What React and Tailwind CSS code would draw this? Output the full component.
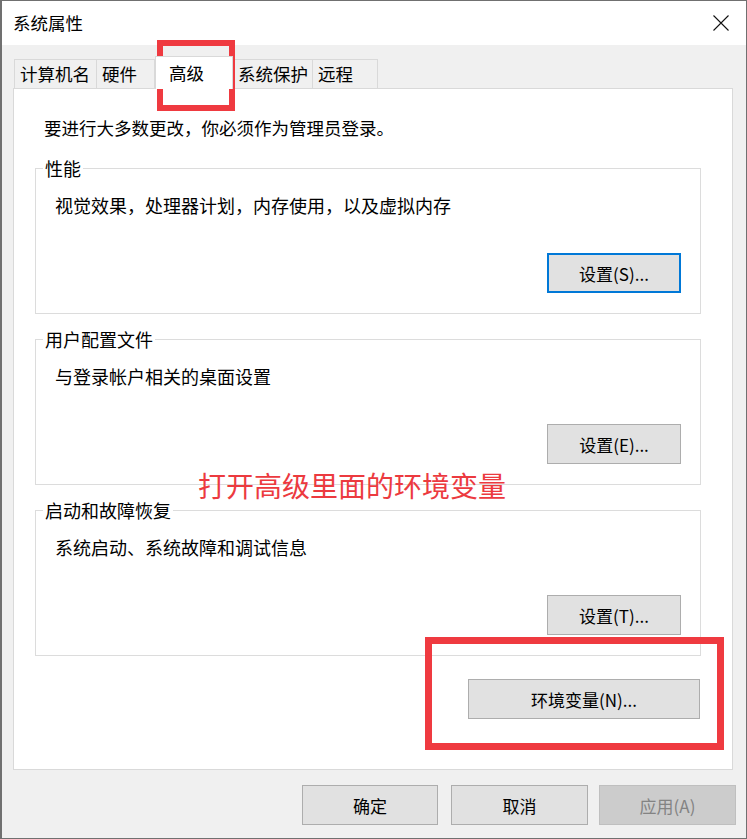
import React from "react";

const font = { fontFamily: '"Noto Sans CJK SC", "Noto Sans", sans-serif' };

function Btn({ children, w = "w-[134px]", focused, disabled }) {
  const cls = focused
    ? "border-2 border-[#0078d7] bg-[#e1e1e1] text-black"
    : disabled
    ? "border border-[#bfbfbf] bg-[#cccccc] text-[#838383]"
    : "border border-[#adadad] bg-[#e1e1e1] text-black";
  return (
    <div className={`${w} h-[40px] flex items-center justify-center text-[17px] leading-none ${cls}`}>
      {children}
    </div>
  );
}

function Group({ title, desc, button, focused }) {
  return (
    <div className="relative w-[666px] h-[146px] border border-[#dcdcdc] pl-[19px] pr-[19px] pt-[27px]">
      <span className="absolute -top-[10px] left-[7px] bg-white px-[2px] text-[18px] leading-[18px]">{title}</span>
      <p className="text-[18px] leading-[18px]">{desc}</p>
      <div className="flex justify-end mt-[39px]">
        <Btn focused={focused}>{button}</Btn>
      </div>
    </div>
  );
}

const tabs = [
  { label: "计算机名", w: "w-[83px]" },
  { label: "硬件", w: "w-[58px]" },
  { label: "高级", w: "w-[78px]", active: true },
  { label: "系统保护", w: "w-[80px]" },
  { label: "远程", w: "w-[65px]" },
];

export default function App() {
  return (
    <div style={font} className="relative w-[747px] h-[839px] flex flex-col border border-l-2 border-[#707070] bg-[#f0f0f0] text-black overflow-hidden">
      {/* title bar */}
      <div className="h-[44px] bg-white flex items-center justify-between pl-[11px] pr-[16px]">
        <span className="text-[17.5px] leading-none">系统属性</span>
        <svg width="16" height="16" viewBox="0 0 16 16" className="mr-[1px]">
          <path d="M0.5 0.5 L15.5 15.5 M15.5 0.5 L0.5 15.5" stroke="#111" strokeWidth="1.1" fill="none" />
        </svg>
      </div>

      <div className="flex-1 pl-[11px] pr-[13px] pt-[11px]">
        {/* tabs */}
        <div className="flex items-end ml-[1px]">
          {tabs.map((t) =>
            t.active ? (
              <div key={t.label} className={`${t.w} relative z-10 h-[33px] -mb-px bg-white border border-b-0 border-[#d9d9d9] pl-[13px] pt-[7px] text-[17.5px] leading-[18px]`}>
                {t.label}
              </div>
            ) : (
              <div key={t.label} className={`${t.w} h-[29px] bg-[#f0f0f0] border border-b-0 border-l-0 first:border-l border-[#d9d9d9] pl-[5px] flex items-center text-[17.5px] leading-[18px]`}>
                {t.label}
              </div>
            )
          )}
        </div>

        {/* panel */}
        <div className="h-[682px] bg-white border border-[#d9d9d9] pl-[21px] pt-[30px]">
          <p className="ml-[9px] text-[17.5px] leading-[18px]">要进行大多数更改，你必须作为管理员登录。</p>
          <div className="mt-[31px] flex flex-col gap-[25px]">
            <Group title="性能" desc="视觉效果，处理器计划，内存使用，以及虚拟内存" button="设置(S)..." focused />
            <Group title="用户配置文件" desc="与登录帐户相关的桌面设置" button="设置(E)..." />
            <Group title="启动和故障恢复" desc="系统启动、系统故障和调试信息" button="设置(T)..." />
          </div>
          <div className="w-[666px] flex justify-end mt-[23px] pr-[1px]">
            <Btn w="w-[232px]">环境变量(N)...</Btn>
          </div>
        </div>

        {/* dialog buttons */}
        <div className="flex justify-end mt-[15px] -mr-[3px]">
          <Btn w="w-[136px]">确定</Btn>
          <div className="ml-[13px]"><Btn w="w-[137px]">取消</Btn></div>
          <div className="ml-[11px]"><Btn w="w-[137px]" disabled>应用(A)</Btn></div>
        </div>
      </div>

      {/* annotations */}
      <div className="absolute left-[155px] top-[39px] w-[78px] h-[71px] border-[6px] border-[#ef3a40]" />
      <div className="absolute left-[423px] top-[636px] w-[299px] h-[113px] border-[7px] border-[#ef3a40]" />
      <span className="absolute left-[196px] top-[469px] text-[28px] leading-[30px] text-[#ec3a3f]">打开高级里面的环境变量</span>
    </div>
  );
}
